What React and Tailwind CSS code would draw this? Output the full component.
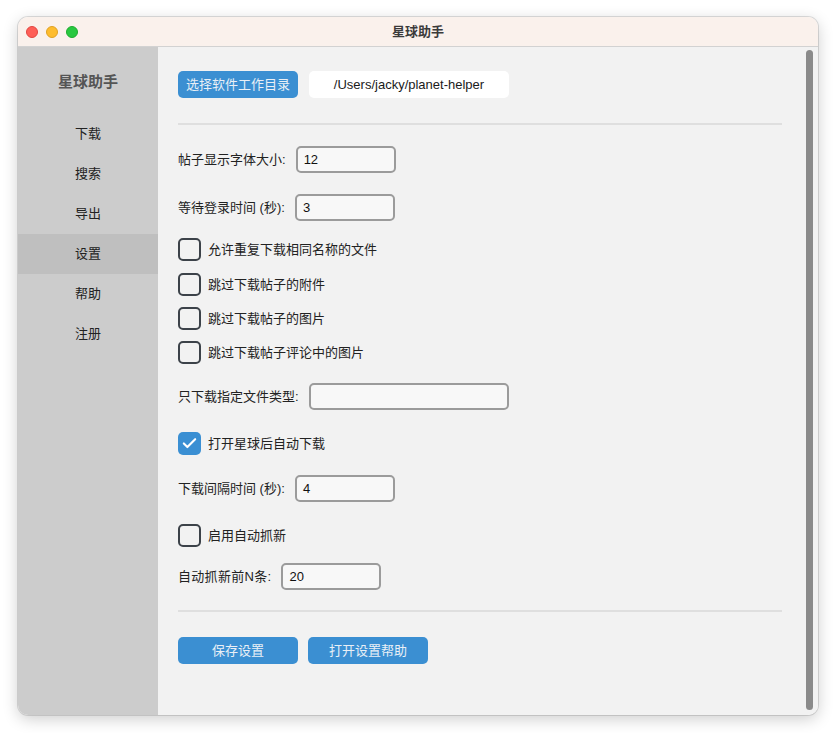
import React from "react";
import { Check } from "lucide-react";

const font = { fontFamily: '"Liberation Sans", "Noto Sans CJK SC", sans-serif' };

const navItems = ["下载", "搜索", "导出", "设置", "帮助", "注册"];

const Field = ({ label, value, inputW = "w-[100px]", className = "" }) => (
  <div className={`flex items-center h-[27px] ${className}`}>
    <span className="text-[13px] text-[#222] mr-[10px]">{label}</span>
    <div
      className={`${inputW} h-[27px] border-2 border-[#9b9b9b] rounded-[5px] bg-[#f8f8f8] flex items-center px-[6px] text-[13px] text-[#111]`}
    >
      {value}
    </div>
  </div>
);

const CheckRow = ({ label, checked, className = "" }) => (
  <div className={`flex items-center h-[23px] ${className}`}>
    {checked ? (
      <div className="w-[23px] h-[23px] rounded-[5px] bg-[#3a8fd3] flex items-center justify-center">
        <Check size={17} strokeWidth={3} className="text-white" />
      </div>
    ) : (
      <div className="w-[23px] h-[23px] rounded-[5px] border-[2.5px] border-[#3c4249]" />
    )}
    <span className="ml-[7px] text-[13px] text-[#222]">{label}</span>
  </div>
);

const BlueButton = ({ children, className = "" }) => (
  <div
    className={`w-[120px] h-[27px] rounded-[5px] bg-[#3b8fd2] text-[#e9eff6] text-[13px] flex items-center justify-center ${className}`}
  >
    {children}
  </div>
);

export default function App() {
  return (
    <div className="w-[836px] h-[733px] bg-white pt-[17px] pl-[18px]" style={font}>
      <div className="w-[800px] h-[698px] rounded-[10px] overflow-hidden flex flex-col shadow-[0_0_0_1px_rgba(0,0,0,0.12),0_4px_16px_rgba(0,0,0,0.2)]">
        {/* title bar */}
        <div className="relative h-[30px] bg-[#faf1ec] border-b border-[#d2d2d2] flex items-center shrink-0">
          <div className="flex gap-[8px] pl-[8px]">
            <span className="w-[12px] h-[12px] rounded-full bg-[#fe5f57] border border-[#e14640]" />
            <span className="w-[12px] h-[12px] rounded-full bg-[#febc2e] border border-[#dfa123]" />
            <span className="w-[12px] h-[12px] rounded-full bg-[#28c840] border border-[#1eab2f]" />
          </div>
          <div className="absolute inset-0 flex items-center justify-center text-[13px] font-bold text-[#3a3a3a]">
            星球助手
          </div>
        </div>

        <div className="flex flex-1 min-h-0">
          {/* sidebar */}
          <div className="w-[140px] bg-[#cccccc] flex flex-col shrink-0">
            <div className="h-[67px] pt-[24px] text-center text-[15px] font-bold text-[#555]">星球助手</div>
            <div className="flex flex-col">
              {navItems.map((n) => (
                <div
                  key={n}
                  className={`h-[40px] flex items-center justify-center text-[13px] text-[#222] ${
                    n === "设置" ? "bg-[#bfbfbf]" : ""
                  }`}
                >
                  {n}
                </div>
              ))}
            </div>
          </div>

          {/* main */}
          <div className="flex-1 bg-[#f2f2f2] flex">
            <div className="flex-1 pl-[20px] pr-[24px] pt-[24px] flex flex-col">
              <div className="flex items-center gap-[11px]">
                <BlueButton>选择软件工作目录</BlueButton>
                <div className="w-[200px] h-[27px] bg-white rounded-[5px] flex items-center justify-center text-[13px] text-[#1a1a1a]">
                  /Users/jacky/planet-helper
                </div>
              </div>

              <div className="h-[2px] bg-[#dfdfdf] mt-[25px]" />

              <Field label="帖子显示字体大小:" value="12" className="mt-[21px]" />
              <Field label="等待登录时间 (秒):" value="3" className="mt-[21px]" />

              <CheckRow label="允许重复下载相同名称的文件" className="mt-[17px]" />
              <CheckRow label="跳过下载帖子的附件" className="mt-[12px]" />
              <CheckRow label="跳过下载帖子的图片" className="mt-[11px]" />
              <CheckRow label="跳过下载帖子评论中的图片" className="mt-[11px]" />

              <Field label="只下载指定文件类型:" value="" inputW="w-[200px]" className="mt-[19px]" />

              <CheckRow label="打开星球后自动下载" checked className="mt-[22px]" />

              <Field label="下载间隔时间 (秒):" value="4" className="mt-[20px]" />

              <CheckRow label="启用自动抓新" className="mt-[22px]" />

              <Field label="自动抓新前N条:" value="20" className="mt-[16px] [&>span]:tracking-[0.3px]" />

              <div className="h-[2px] bg-[#dfdfdf] mt-[20px]" />

              <div className="flex gap-[10px] mt-[25px]">
                <BlueButton>保存设置</BlueButton>
                <BlueButton>打开设置帮助</BlueButton>
              </div>
            </div>
            <div className="w-[7px] bg-[#8a8a8a] rounded-full mt-[3px] mb-[5px] mr-[5px]" />
          </div>
        </div>
      </div>
    </div>
  );
}
